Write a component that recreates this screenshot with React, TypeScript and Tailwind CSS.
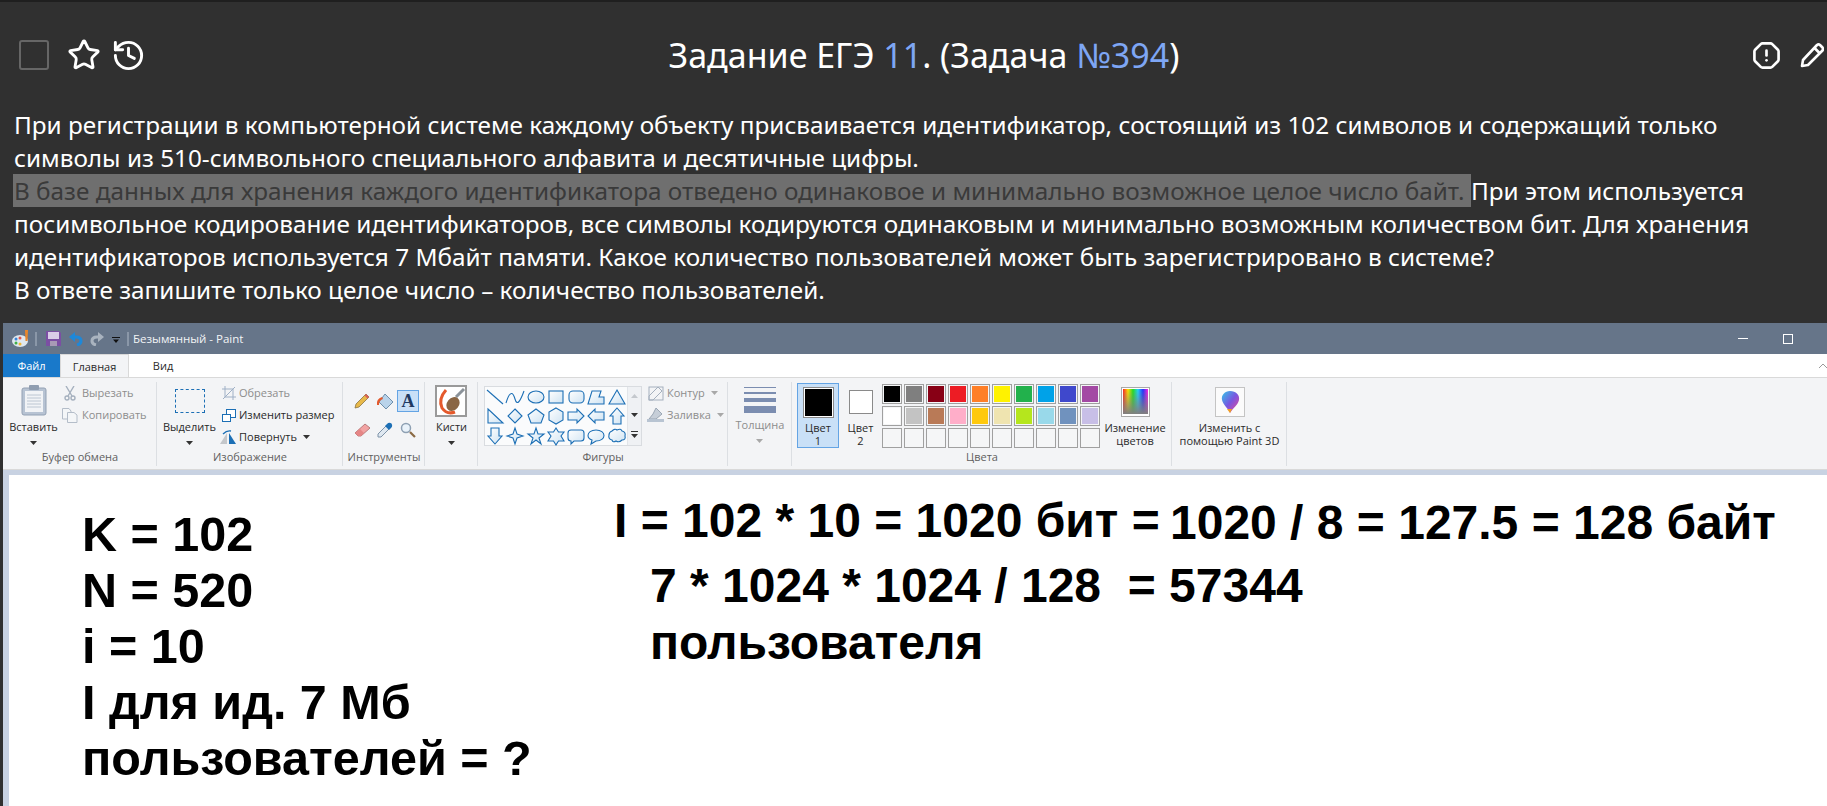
import { History, OctagonAlert, Star } from 'lucide-react'

const SHAPES: React.ReactNode[] = [
  <path d="M2 3L18 17" />,
  <path d="M1 16C5 3 8 5 10 12S15 15 19 4" fill="none" />,
  <ellipse cx="10" cy="10" rx="8" ry="6" />,
  <rect x="3" y="4" width="14" height="12" />,
  <rect x="3" y="4" width="15" height="12" rx="4" />,
  <path d="M2 17L6 4H15L13 10H18V17Z" />,
  <path d="M10 3L18 17H2Z" />,
  <path d="M3 3L18 17H3Z" />,
  <path d="M10 3L17 10 10 17 3 10Z" />,
  <path d="M10 3L18 9 15 17H5L2 9Z" />,
  <path d="M10 2L17 6V14L10 18 3 14V6Z" />,
  <path d="M2 6H11V3L18 10 11 17V14H2Z" />,
  <path d="M18 6H9V3L2 10 9 17V14H18Z" />,
  <path d="M10 2L17 10H14V18H6V10H3Z" />,
  <path d="M10 18L17 10H14V2H6V10H3Z" />,
  <path d="M10 2L12 8 18 10 12 12 10 18 8 12 2 10 8 8Z" />,
  <path d="M10 2L12 8H18L13 12 15 18 10 14 5 18 7 12 2 8H8Z" />,
  <path d="M10 2L12.5 6H18L15 10 18 15H12.5L10 19 7.5 15H2L5 10 2 6H7.5Z" />,
  <path d="M5 4H15Q18 4 18 7V12Q18 15 15 15H8L5 18V15Q2 15 2 12V7Q2 4 5 4Z" />,
  <path d="M10 4C15 4 18 6.500 18 9.500S15 15 10 15L5 18 6 14C3 13 2 11.500 2 9.500 2 6.500 5 4 10 4Z" />,
  <path d="M5 5Q8 2 10 4 14 2 15 5 19 6 18 10 19 14 15 14 12 17 9 15 6 17 5 14 1 13 2 9 2 6 5 5Z" />,
]

const COLOURS = [
  ['bg-[#000000]', 'bg-[#7f7f7f]', 'bg-[#880015]', 'bg-[#ed1c24]', 'bg-[#ff7f27]', 'bg-[#fff200]', 'bg-[#22b14c]', 'bg-[#00a2e8]', 'bg-[#3f48cc]', 'bg-[#a349a4]'],
  ['bg-[#ffffff]', 'bg-[#c3c3c3]', 'bg-[#b97a57]', 'bg-[#ffaec9]', 'bg-[#ffc90e]', 'bg-[#efe4b0]', 'bg-[#b5e61d]', 'bg-[#99d9ea]', 'bg-[#7092be]', 'bg-[#c8bfe7]'],
  ['', '', '', '', '', '', '', '', '', ''],
]

function Caret({ light = false }: { light?: boolean }): React.JSX.Element {
  return (
    <svg width="7" height="4" viewBox="0 0 7 4" className="shrink-0">
      <path d="M0 0H7L3.500 4Z" fill={light ? '#a8a8a8' : '#333'} />
    </svg>
  )
}

function Group({
  width,
  label,
  children
}: {
  width: string
  label: string
  children: React.ReactNode
}): React.JSX.Element {
  return (
    <div className={`${width} relative flex h-full shrink-0 flex-col`}>
      <div className="flex min-h-0 flex-1">{children}</div>
      <div className="h-[22px] text-center text-[11px] leading-[20px] text-[#5f5f5f]">{label}</div>
      <div className="absolute top-[3px] right-0 bottom-[3px] w-px bg-[#dcdfe3]" />
    </div>
  )
}

function BigLabel({ text, light = false }: { text: string; light?: boolean }): React.JSX.Element {
  return (
    <div className={`flex flex-col items-center text-[11px] leading-[16px] ${light ? 'text-[#8d8d8d]' : 'text-[#2a2a2a]'}`}>
      <span>{text}</span>
      <div className="mt-[6px]">
        <Caret light={light} />
      </div>
    </div>
  )
}

function PaintWindow(): React.JSX.Element {
  return (
    <div className="ml-[3px] flex min-h-0 flex-1 flex-col bg-white font-['Open_Sans',sans-serif] whitespace-nowrap">
      {/* title bar */}
      <div className="flex h-[31px] shrink-0 items-center bg-[#667589] pl-[9px] text-[11.500px] text-white">
        <svg width="18" height="18" viewBox="0 0 18 18">
          <ellipse cx="8" cy="11" rx="8" ry="6" fill="#dfe7ee" />
          <circle cx="4" cy="9" r="1.500" fill="#3b86d6" />
          <circle cx="8" cy="8" r="1.500" fill="#e2574c" />
          <circle cx="4" cy="13" r="1.500" fill="#3fae49" />
          <circle cx="8" cy="14" r="1.500" fill="#f2b632" />
          <path d="M13 0H16L15.500 11H13.500Z" fill="#e8872c" />
        </svg>
        <div className="ml-[5px] h-[14px] w-[2px] bg-[#8a97a8]" />
        <svg width="15" height="15" viewBox="0 0 15 15" className="ml-[9px]">
          <path d="M0 0H13L15 2V15H0Z" fill="#7b4fa3" />
          <rect x="2" y="1" width="11" height="7" fill="#d9cce8" />
          <rect x="4" y="10" width="7" height="5" fill="#a89bb5" />
        </svg>
        <svg width="14" height="14" viewBox="0 0 14 14" className="ml-[8px]">
          <path d="M0 5L6 0V10Z" fill="#1e88d8" />
          <path d="M5 5H7Q12 5 12 9 12 12 8 13" fill="none" stroke="#1e88d8" strokeWidth="3" />
        </svg>
        <svg width="14" height="14" viewBox="0 0 14 14" className="ml-[7px] -scale-x-100">
          <path d="M0 5L6 0V10Z" fill="#a9b3bf" />
          <path d="M5 5H7Q12 5 12 9 12 12 8 13" fill="none" stroke="#a9b3bf" strokeWidth="3" />
        </svg>
        <svg width="8" height="6" viewBox="0 0 8 6" className="mt-[3px] ml-[8px]">
          <path d="M0 0H8V1H0ZM1 2.500H7L4 6Z" fill="#111" />
        </svg>
        <div className="ml-[7px] h-[14px] w-[2px] bg-[#8a97a8]" />
        <span className="ml-[4px] text-[#f2f4f6]">Безымянный - Paint</span>
        <div className="ml-auto h-px w-[10px] bg-white" />
        <div className="mr-[34px] ml-[35px] h-[10px] w-[10px] border border-white" />
      </div>

      {/* tabs */}
      <div className="flex h-[23px] shrink-0 items-stretch text-[11px] leading-[23px]">
        <div className="w-[57px] bg-[#1979ca] text-center text-white">Файл</div>
        <div className="w-[69px] border-x border-t border-[#d9d9d9] bg-[#f3f4f6] text-center text-[#2a2a2a]">Главная</div>
        <div className="w-[68px] text-center text-[#2a2a2a]">Вид</div>
        <svg width="8" height="5" viewBox="0 0 8 5" className="mt-[9px] ml-auto">
          <path d="M0 5L4 1 8 5" fill="none" stroke="#999" />
        </svg>
      </div>

      {/* ribbon */}
      <div className="flex h-[93px] shrink-0 border-y border-[#d9d9d9] bg-[#f3f4f6] pt-[1px]">
        <Group width="w-[154px]" label="Буфер обмена">
          <div className="flex w-[61px] flex-col items-center pt-[6px]">
            <svg width="26" height="31" viewBox="0 0 26 31">
              <rect x="1" y="3" width="24" height="27" rx="2" fill="#b7c3d3" stroke="#93a1b4" />
              <rect x="4" y="6" width="18" height="21" fill="#f1f3f6" />
              <path d="M6 10H20M6 13H20M6 16H20M6 19H20M6 22H20" stroke="#bcc6d2" />
              <rect x="8" y="0" width="10" height="5" rx="1" fill="#8f9db0" />
            </svg>
            <div className="mt-[3px]">
              <BigLabel text="Вставить" />
            </div>
          </div>
          <div className="flex flex-col gap-[6px] pt-[6px] text-[11px] leading-[16px] text-[#8d8d8d]">
            <div className="flex h-[16px] items-center gap-[6px]">
              <svg width="12" height="15" viewBox="0 0 12 15" fill="none" stroke="#a5b0be" strokeWidth="1.400">
                <path d="M2 0L8 10M10 0L4 10" />
                <circle cx="3" cy="12" r="2" />
                <circle cx="9" cy="12" r="2" />
              </svg>
              <span>Вырезать</span>
            </div>
            <div className="-ml-[2px] flex h-[16px] items-center gap-[4px]">
              <svg width="16" height="15" viewBox="0 0 16 15" fill="#f4f6f8" stroke="#b4bdc9">
                <path d="M.5.5H7L9 3V11H.5Z" />
                <path d="M5.500 4.500H12L15 7V14.500H5.500Z" />
              </svg>
              <span>Копировать</span>
            </div>
          </div>
        </Group>

        <Group width="w-[186px]" label="Изображение">
          <div className="flex w-[65px] flex-col items-center pt-[10px]">
            <div className="h-[24px] w-[30px] border border-dashed border-[#1c6fb5]" />
            <div className="mt-[6px]">
              <BigLabel text="Выделить" />
            </div>
          </div>
          <div className="flex flex-col gap-[6px] pt-[6px] text-[11px] leading-[16px] text-[#2a2a2a]">
            <div className="flex h-[16px] items-center gap-[3px] text-[#8d8d8d]">
              <svg width="14" height="14" viewBox="0 0 14 14" fill="none" stroke="#9fb0c6">
                <path d="M3 0V11H14M0 3H11V14M1 13L13 1" />
              </svg>
              <span>Обрезать</span>
            </div>
            <div className="flex h-[16px] items-center gap-[3px]">
              <svg width="14" height="13" viewBox="0 0 14 13" fill="#fff" stroke="#1c6fb5">
                <rect x="4.500" y=".5" width="9" height="8" />
                <rect x=".5" y="5.500" width="8" height="7" />
              </svg>
              <span>Изменить размер</span>
            </div>
            <div className="-ml-[2px] flex h-[16px] items-center gap-[3px]">
              <svg width="16" height="14" viewBox="0 0 16 14">
                <path d="M7 3V14H0Z" fill="#c4c7cb" />
                <path d="M9 3V14H16Z" fill="#1c6fb5" />
                <path d="M3 4Q7 0 11 1" fill="none" stroke="#1c6fb5" strokeWidth="1.300" />
              </svg>
              <span>Повернуть</span>
              <div className="ml-[3px]">
                <Caret />
              </div>
            </div>
          </div>
        </Group>

        <Group width="w-[82px]" label="Инструменты">
          <div className="grid h-fit grid-cols-[repeat(3,22px)] gap-x-[1px] gap-y-[7px] pt-[11px] pl-[8px]">
            <div className="flex h-[22px] items-center justify-center">
              <svg width="16" height="16" viewBox="0 0 16 16">
                <path d="M12 1L15 4 5 14 1 15 2 11Z" fill="#e8b94a" stroke="#8a7440" strokeWidth=".8" />
                <path d="M12 1L15 4 13.500 5.500 10.500 2.500Z" fill="#d9605a" />
              </svg>
            </div>
            <div className="flex h-[22px] items-center justify-center">
              <svg width="18" height="17" viewBox="0 0 18 17">
                <path d="M9 1L17 9 10 16 3 9Z" fill="#b9d3ea" stroke="#6f8fab" />
                <path d="M1 12Q0 6 6 4L7 6Q3 7 3 12Z" fill="#e4592c" />
              </svg>
            </div>
            <div className="flex h-[22px] items-center justify-center border border-[#64a4e4] bg-[#c9e0f7] font-['Liberation_Serif',serif] text-[18px] leading-none font-bold text-[#1f3a63]">
              A
            </div>
            <div className="flex h-[22px] items-center justify-center">
              <svg width="17" height="14" viewBox="0 0 17 14">
                <path d="M11 1L16 5 7 13H4L1 10Z" fill="#f2a3a3" stroke="#b97b7b" />
                <path d="M1 10L6 6 10 10 7 13H4Z" fill="#e58686" />
              </svg>
            </div>
            <div className="flex h-[22px] items-center justify-center">
              <svg width="16" height="16" viewBox="0 0 16 16">
                <path d="M9 4L12 7 4 15 1 15 1 12Z" fill="#dfe8f1" stroke="#7e93a8" />
                <path d="M8 4L10 2Q12 0 14.500 1.500 16 4 14 6L12 8Z" fill="#1c6fb5" />
              </svg>
            </div>
            <div className="flex h-[22px] items-center justify-center">
              <svg width="16" height="16" viewBox="0 0 16 16" fill="none">
                <circle cx="6" cy="6" r="4.500" stroke="#8ea0b3" strokeWidth="1.500" fill="#e9f2fa" />
                <path d="M10 10L15 15" stroke="#8a6a44" strokeWidth="2.200" />
              </svg>
            </div>
          </div>
        </Group>

        <div className="relative flex h-full w-[53px] shrink-0 flex-col items-center pt-[6px]">
          <svg width="32" height="32" viewBox="0 0 32 32" className="-translate-x-[1px]">
            <rect x="1" y="1" width="30" height="30" fill="#fff" stroke="#9a9a9a" strokeWidth="2" />
            <path d="M11 5Q3 14 7 23 12 30 20 27" fill="none" stroke="#e4592c" strokeWidth="3" />
            <path d="M29 4L21 12" stroke="#8c939a" strokeWidth="3" />
            <ellipse cx="18" cy="19" rx="6" ry="7.500" transform="rotate(40 18 19)" fill="#8a6644" />
          </svg>
          <div className="mt-[2px]">
            <BigLabel text="Кисти" />
          </div>
          <div className="absolute top-[3px] right-0 bottom-[3px] w-px bg-[#dcdfe3]" />
        </div>

        <Group width="w-[250px]" label="Фигуры">
          <svg width="0" height="0" className="absolute">
            <linearGradient id="shapeFill" x1="0" y1="0" x2="1" y2="1">
              <stop offset="0" stopColor="#ffffff" />
              <stop offset="1" stopColor="#cfe3f2" />
            </linearGradient>
          </svg>
          <div className="mt-[7px] ml-[6px] flex h-[60px] border border-[#d9dce0] bg-[#fafbfc]">
            <div className="grid w-[142px] grid-cols-7 grid-rows-3">
              {SHAPES.map((shape, i) => (
                <svg key={i} width="20" height="20" viewBox="0 0 20 20" fill="url(#shapeFill)" stroke="#1c6fb5" strokeWidth="1.100">
                  {shape}
                </svg>
              ))}
            </div>
            <div className="flex w-[14px] flex-col items-center justify-between border-l border-[#e2e5e9] bg-[#eff1f4] py-[7px]">
              <svg width="7" height="4" viewBox="0 0 7 4"><path d="M0 4H7L3.500 0Z" fill="#c4c8cd" /></svg>
              <Caret />
              <svg width="7" height="7" viewBox="0 0 7 7"><path d="M0 0H7V1H0ZM0 3H7L3.500 7Z" fill="#333" /></svg>
            </div>
          </div>
          <div className="flex flex-col gap-[6px] pt-[6px] pl-[6px] text-[11px] leading-[16px] text-[#8d8d8d]">
            <div className="flex h-[16px] items-center gap-[3px]">
              <svg width="16" height="16" viewBox="0 0 16 16" fill="none" stroke="#a5b0be">
                <path d="M1 15V11L10 2 14 6 5 15Z" />
                <rect x="1" y="2" width="14" height="13" />
              </svg>
              <span>Контур</span>
              <div className="ml-[3px]"><Caret light /></div>
            </div>
            <div className="-ml-[1px] flex h-[16px] items-center gap-[3px]">
              <svg width="17" height="16" viewBox="0 0 17 16">
                <path d="M9 1L15 7 9 12H2L6 7Z" fill="#c6ced8" stroke="#9aa6b4" />
                <rect x="0" y="12" width="17" height="3" fill="#b8c4d2" />
              </svg>
              <span>Заливка</span>
              <div className="ml-[3px]"><Caret light /></div>
            </div>
          </div>
        </Group>

        <Group width="w-[64px]" label="">
          <div className="flex w-full flex-col items-center pt-[8px]">
            <div className="flex w-[32px] flex-col gap-[4px]">
              <div className="h-px bg-[#7b8db0]" />
              <div className="h-[2px] bg-[#7b8db0]" />
              <div className="h-[4px] bg-[#7b8db0]" />
              <div className="h-[7px] bg-[#7b8db0]" />
            </div>
            <div className="mt-[4px]">
              <BigLabel text="Толщина" light />
            </div>
          </div>
        </Group>

        <Group width="w-[380px]" label="Цвета">
          <div className="mt-[4px] ml-[5px] flex h-[65px] w-[42px] flex-col items-center border border-[#64a4e4] bg-[#c9e0f7] pt-[3px] text-[11px] leading-[13px] text-[#2a2a2a]">
            <div className="h-[32px] w-[31px] border border-[#8a8a8a] bg-white p-px">
              <div className="h-full w-full bg-black" />
            </div>
            <span className="mt-[3px]">Цвет</span>
            <span>1</span>
          </div>
          <div className="flex w-[43px] flex-col items-center pt-[11px] text-[11px] leading-[13px] text-[#2a2a2a]">
            <div className="h-[24px] w-[24px] border border-[#8a8a8a] bg-white" />
            <span className="mt-[7px]">Цвет</span>
            <span>2</span>
          </div>
          <div className="mt-[5px] grid h-fit grid-cols-[repeat(10,20px)] gap-[2px]">
            {COLOURS.flat().map((colour, i) => (
              <div key={i} className="h-[20px] w-[20px] border border-[#a0a0a0] bg-[#f5f6f7] p-px">
                <div className={`h-full w-full ${colour}`} />
              </div>
            ))}
          </div>
          <div className="flex w-[70px] flex-col items-center pt-[8px] text-center text-[11px] leading-[13px] text-[#2a2a2a]">
            <svg width="29" height="30" viewBox="0 0 29 30">
              <linearGradient id="hues" x1="0" y1="0" x2="1" y2="0">
                <stop offset="0" stopColor="#ff2020" />
                <stop offset=".2" stopColor="#ffe000" />
                <stop offset=".4" stopColor="#20e020" />
                <stop offset=".6" stopColor="#20d0ff" />
                <stop offset=".8" stopColor="#2030ff" />
                <stop offset="1" stopColor="#ff20e0" />
              </linearGradient>
              <linearGradient id="fade" x1="0" y1="0" x2="0" y2="1">
                <stop offset="0" stopColor="#808080" stopOpacity="0" />
                <stop offset="1" stopColor="#808080" stopOpacity="1" />
              </linearGradient>
              <rect x=".5" y=".5" width="28" height="29" fill="#fff" stroke="#a8a8a8" />
              <rect x="2" y="2" width="25" height="25" fill="url(#hues)" />
              <rect x="2" y="2" width="25" height="25" fill="url(#fade)" />
            </svg>
            <span className="mt-[4px]">Изменение</span>
            <span>цветов</span>
          </div>
        </Group>

        <div className="relative flex h-full w-[115px] shrink-0 flex-col items-center pt-[8px] text-center text-[11px] leading-[13px] text-[#2a2a2a]">
          <svg width="30" height="30" viewBox="0 0 30 30">
            <linearGradient id="balloon" x1="0" y1="0" x2="1" y2="1">
              <stop offset="0" stopColor="#31c6e8" />
              <stop offset=".5" stopColor="#7a55e0" />
              <stop offset="1" stopColor="#f04a90" />
            </linearGradient>
            <rect x=".5" y=".5" width="29" height="29" fill="#fbfbfb" stroke="#c4c4c4" />
            <path d="M15 4C21 4 25 8 24 13 23 18 18 21 15 26 14 22 8 18 7 13 6 8 10 4 15 4Z" fill="url(#balloon)" />
            <path d="M12 22L15 26 17 22Z" fill="#f2a020" />
          </svg>
          <span className="mt-[4px]">Изменить с</span>
          <span>помощью Paint 3D</span>
          <div className="absolute top-[3px] right-0 bottom-[3px] w-px bg-[#dcdfe3]" />
        </div>
      </div>

      <div className="h-[5px] shrink-0 bg-[#c8d2e2]" />

      {/* canvas */}
      <div className="flex min-h-0 flex-1">
        <div className="w-[6px] shrink-0 bg-[#c8d2e2]" />
        <div className="relative flex-1 overflow-hidden bg-white font-['Liberation_Sans',sans-serif] font-bold whitespace-pre text-black">
          <div className="absolute top-[31px] left-[73px] text-[48.500px] leading-[56px]">
            K = 102
            <br />
            N = 520
            <br />
            i = 10
            <br />
            I для ид. 7 Мб
            <br />
            пользователей = ?
          </div>
          <div className="absolute top-[18px] left-[605px] text-[48px] leading-[56px]">I = 102 * 10 = 1020 бит =</div>
          <div className="absolute top-[20px] left-[1161px] text-[48px] leading-[56px]">1020 / 8 = 127.5 = 128 байт</div>
          <div className="absolute top-[82px] left-[641px] text-[48px] leading-[57px]">
            7 * 1024 * 1024 / 128  = 57344
            <br />
            пользователя
          </div>
        </div>
      </div>
    </div>
  )
}

export default function App(): React.JSX.Element {
  return (
    <div className="flex h-[806px] w-[1827px] flex-col overflow-hidden border-t-2 border-[#1f1f1f] bg-[#303030] font-['Noto_Sans',sans-serif] text-white">
      <div className="flex h-[106px] shrink-0 items-center">
        <div className="flex w-[166px] shrink-0 items-center pl-[19px]">
          <div className="h-[30px] w-[30px] shrink-0 rounded-[3px] border-2 border-[#666666]" />
          <Star size={34} strokeWidth={2} className="ml-[18px] shrink-0" />
          <History size={35} strokeWidth={2} className="ml-[10px] shrink-0" />
        </div>
        <h1 className="flex-1 text-center text-[34px] leading-[40px] font-normal">
          Задание ЕГЭ <span className="text-[#7ea6f4]">11</span>. (Задача <span className="text-[#7ea6f4]">№394</span>)
        </h1>
        <div className="flex w-[145px] shrink-0 items-center justify-end gap-[19px] pr-[3px]">
          <OctagonAlert size={29} strokeWidth={2.2} />
          <svg width="24" height="25" viewBox="0 0 24 25" fill="none" stroke="white" strokeWidth="2.600" strokeLinejoin="round">
            <path d="M2 23L3 17 17 2Q18.500 .8 20 2L22.500 4.500Q23.500 6 22.500 7.500L8 22Z" />
            <path d="M14.500 5L20 10.500" />
          </svg>
        </div>
      </div>

      <div className="shrink-0 pl-[14px] text-[24.300px] leading-[33px] whitespace-pre">
        При регистрации в компьютерной системе каждому объекту присваивается идентификатор, состоящий из 102 символов и содержащий только
        <br />
        символы из 510-символьного специального алфавита и десятичные цифры.
        <br />
        <span className="-ml-px inline-block bg-[#6f6f6f] pl-px text-[#3a3a3a]">В базе данных для хранения каждого идентификатора отведено одинаковое и минимально возможное целое число байт. </span>При этом используется
        <br />
        посимвольное кодирование идентификаторов, все символы кодируются одинаковым и минимально возможным количеством бит. Для хранения
        <br />
        идентификаторов используется 7 Мбайт памяти. Какое количество пользователей может быть зарегистрировано в системе?
        <br />
        В ответе запишите только целое число – количество пользователей.
      </div>

      <div className="h-[17px] shrink-0" />
      <PaintWindow />
    </div>
  )
}
